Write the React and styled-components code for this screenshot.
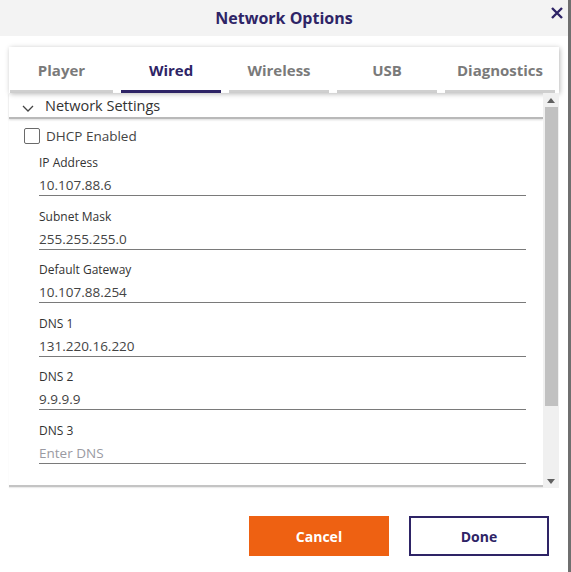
import React from "react";
import styled, { createGlobalStyle } from "styled-components";

const Global = createGlobalStyle`
  body {
    margin: 0;
    background: #ffffff;
    font-family: "Open Sans", "Noto Sans", sans-serif;
  }
`;

const Dialog = styled.div`
  width: 568px;
  height: 572px;
  border-right: 3px solid #6f6f6f;
  display: flex;
  flex-direction: column;
  background: #ffffff;
`;

const Header = styled.div`
  height: 36px;
  background: #f3f3f3;
  display: grid;
  grid-template-columns: 1fr auto 1fr;
  align-items: center;
`;

const Title = styled.h1`
  grid-column: 2;
  margin: 0;
  font-size: 16px;
  font-weight: 700;
  color: #2e2466;
`;

const Close = styled.button`
  justify-self: end;
  align-self: start;
  margin: 6px 4px 0 0;
  padding: 0;
  border: none;
  background: none;
  color: #2e2466;
  display: flex;
  cursor: pointer;
`;

const Body = styled.div`
  padding: 11px 0 0 9px;
`;

const TabCard = styled.div`
  width: 550px;
  height: 46px;
  box-sizing: border-box;
  padding: 0 4px 0 1px;
  display: flex;
  gap: 8px;
  background: #ffffff;
  box-shadow: 1px 1px 5px rgba(0, 0, 0, 0.28);
`;

const Tab = styled.div`
  width: ${(p) => p.$w}px;
  display: flex;
  align-items: flex-end;
  justify-content: center;
  padding-bottom: 10px;
  font-size: 15px;
  font-weight: 700;
  color: ${(p) => (p.$active ? "#2e2466" : "#7a7a7a")};
  border-bottom: 3px solid ${(p) => (p.$active ? "#2e2466" : "#cfcfcf")};
`;

const Panel = styled.div`
  display: flex;
  height: 395px;
`;

const Content = styled.div`
  width: 534px;
  display: flex;
  flex-direction: column;
  border-bottom: 2px solid #c4c4c4;
  box-shadow: 0 1px 1px rgba(0, 0, 0, 0.08);
  height: 392px;
`;

const SectionHead = styled.div`
  height: 24px;
  display: flex;
  align-items: center;
  gap: 11px;
  padding-left: 13px;
  font-size: 14.5px;
  color: #333333;
  border-bottom: 2px solid #b9b9b9;
  box-shadow: 0 1px 2px rgba(0, 0, 0, 0.15);

  svg {
    margin-top: 7px;
  }
`;

const CheckRow = styled.label`
  display: flex;
  align-items: center;
  gap: 6px;
  margin: 8px 0 0 15px;
  font-size: 13.5px;
  color: #444444;
`;

const Box = styled.span`
  width: 14px;
  height: 14px;
  border: 1px solid #6a6a6a;
  border-radius: 2px;
`;

const Fields = styled.div`
  padding: 4px 17px 0 30px;
  display: flex;
  flex-direction: column;
  gap: 6.5px;
`;

const Field = styled.div`
  padding-top: 6px;
  border-bottom: 1px solid #7a7a7a;
`;

const Label = styled.div`
  font-size: 12px;
  line-height: 16px;
  color: #333333;
`;

const Value = styled.div`
  margin-top: 4px;
  font-size: 13.5px;
  line-height: 20px;
  color: ${(p) => (p.$placeholder ? "#9a9aa2" : "#444444")};
`;

const Scrollbar = styled.div`
  width: 16px;
  background: #f0f0f0;
  display: flex;
  flex-direction: column;
  align-items: center;
`;

const Arrow = styled.div`
  height: 14px;
  display: flex;
  align-items: center;
  justify-content: center;
  color: #606060;
`;

const Thumb = styled.div`
  width: 13px;
  height: 299px;
  background: #c1c1c1;
`;

const Track = styled.div`
  flex: 1;
`;

const Footer = styled.div`
  display: flex;
  justify-content: flex-end;
  gap: 20px;
  padding: 28px 19px 0 0;
`;

const Button = styled.button`
  width: 140px;
  height: 40px;
  box-sizing: border-box;
  font-family: inherit;
  font-size: 14px;
  font-weight: 700;
  cursor: pointer;
  border: 2px solid ${(p) => (p.$primary ? "#ee6112" : "#2e2466")};
  background: ${(p) => (p.$primary ? "#ee6112" : "#ffffff")};
  color: ${(p) => (p.$primary ? "#ffffff" : "#2e2466")};
`;

const tabs = [
  { name: "Player", w: 103 },
  { name: "Wired", w: 100 },
  { name: "Wireless", w: 100 },
  { name: "USB", w: 100 },
  { name: "Diagnostics", w: 110 },
];

const fields = [
  { label: "IP Address", value: "10.107.88.6" },
  { label: "Subnet Mask", value: "255.255.255.0" },
  { label: "Default Gateway", value: "10.107.88.254" },
  { label: "DNS 1", value: "131.220.16.220" },
  { label: "DNS 2", value: "9.9.9.9" },
  { label: "DNS 3", placeholder: "Enter DNS" },
];

export default function App() {
  return (
    <>
      <Global />
      <Dialog>
        <Header>
          <Title>Network Options</Title>
          <Close aria-label="Close">
            <svg width="14" height="14" viewBox="0 0 14 14">
              <path d="M2 2 L12 12 M12 2 L2 12" stroke="currentColor" strokeWidth="2.4" />
            </svg>
          </Close>
        </Header>
        <Body>
          <TabCard>
            {tabs.map((t) => (
              <Tab key={t.name} $w={t.w} $active={t.name === "Wired"}>
                {t.name}
              </Tab>
            ))}
          </TabCard>
          <Panel>
            <Content>
              <SectionHead>
                <svg width="12" height="7" viewBox="0 0 12 7">
                  <path d="M1 1 L6 6 L11 1" fill="none" stroke="#444" strokeWidth="1.3" />
                </svg>
                Network Settings
              </SectionHead>
              <CheckRow>
                <Box />
                DHCP Enabled
              </CheckRow>
              <Fields>
                {fields.map((f) => (
                  <Field key={f.label}>
                    <Label>{f.label}</Label>
                    <Value $placeholder={!f.value}>{f.value || f.placeholder}</Value>
                  </Field>
                ))}
              </Fields>
            </Content>
            <Scrollbar>
              <Arrow>
                <svg width="8" height="5" viewBox="0 0 8 5">
                  <path d="M0 5 L4 0 L8 5 Z" fill="currentColor" />
                </svg>
              </Arrow>
              <Thumb />
              <Track />
              <Arrow>
                <svg width="8" height="5" viewBox="0 0 8 5">
                  <path d="M0 0 L4 5 L8 0 Z" fill="currentColor" />
                </svg>
              </Arrow>
            </Scrollbar>
          </Panel>
          <Footer>
            <Button $primary>Cancel</Button>
            <Button>Done</Button>
          </Footer>
        </Body>
      </Dialog>
    </>
  );
}
